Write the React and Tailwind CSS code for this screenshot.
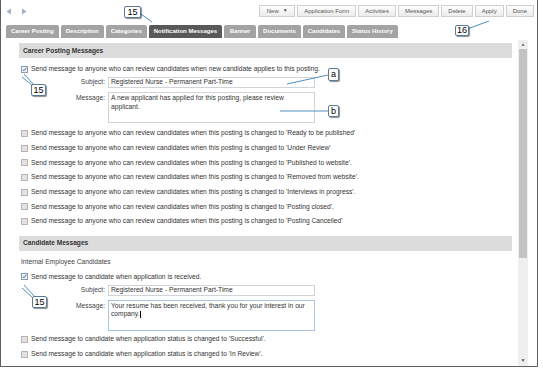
import React from 'react';

const font = { fontFamily: '"Liberation Sans", Arial, sans-serif' };

const buttons = ['Application Form', 'Activities', 'Messages', 'Delete', 'Apply', 'Done'];
const tabs = ['Career Posting', 'Description', 'Categories', 'Notification Messages', 'Banner', 'Documents', 'Candidates', 'Status History'];
const postingStates = [
  "'Ready to be published'",
  "'Under Review'",
  "'Published to website'.",
  "'Removed from website'.",
  "'Interviews in progress'.",
  "'Posting closed'.",
  "'Posting Cancelled'",
];

function Box({ checked }) {
  return (
    <span className={`relative inline-block w-[7px] h-[7px] shrink-0 border ${checked ? 'border-[#8a9bb0] bg-[#f4f6fa]' : 'border-[#b5b5b5] bg-[#e2e2e2]'}`}>
      {checked && (
        <svg viewBox="0 0 7 7" className="absolute left-0 top-0 w-[5px] h-[5px]">
          <path d="M1 3.5 L2.8 5.3 L6 1" fill="none" stroke="#2d5b9a" strokeWidth="1.3" />
        </svg>
      )}
    </span>
  );
}

function CheckRow({ checked, children, h = 'h-[14.7px]' }) {
  return (
    <div className={`flex items-center gap-[3px] pl-[2px] ${h} text-[6.7px] text-[#333]`}>
      <Box checked={checked} />
      <span className="whitespace-nowrap">{children}</span>
    </div>
  );
}

function Header({ children }) {
  return (
    <div className="h-[15px] bg-[#dcdcdc] flex items-center pl-[4px] text-[6.6px] font-bold text-[#333]">{children}</div>
  );
}

function Fields({ message, focus, cursor }) {
  const bc = focus ? 'border-[#a9c6e6]' : 'border-[#cfd4da]';
  return (
    <div className="flex flex-col">
      <div className="flex items-center h-[11px] mt-[2px]">
        <span className="w-[89px] text-right pr-[3px] text-[6.7px] text-[#444]">Subject:</span>
        <div className="w-[207px] h-[11px] border border-[#cfd4da] flex items-center px-[2px] text-[6.7px] text-[#333] whitespace-nowrap">
          Registered Nurse - Permanent Part-Time
        </div>
      </div>
      <div className="flex mt-[4px]">
        <span className="w-[89px] text-right pr-[3px] text-[6.7px] text-[#444] pt-[1px]">Message:</span>
        <div className={`w-[207px] h-[31px] border ${bc} px-[2px] pt-[1px] text-[6.7px] leading-[8.5px] text-[#333]`}>
          {message}
          {cursor && <span className="inline-block w-[1px] h-[7px] bg-black align-middle" />}
        </div>
      </div>
    </div>
  );
}

function Callout({ className, children }) {
  return (
    <div className={`absolute bg-white border border-[#5b7a99] rounded-[2px] shadow-[1px_1px_1px_rgba(0,0,0,0.45)] flex items-center justify-center text-[9px] text-black leading-none ${className}`}>
      {children}
    </div>
  );
}

export default function App() {
  return (
    <div className="relative w-[543px] h-[369px] bg-white overflow-hidden" style={font}>
      <div className="w-[538px] h-[367px] border-l border-r border-b border-[#5f5f5f] flex flex-col">
        {/* toolbar */}
        <div className="h-[23px] flex items-center justify-between pl-[5px] pr-[3px]">
          <div className="flex items-center gap-[9px] mt-[-1px]">
            <svg width="6" height="7" viewBox="0 0 6 7"><path d="M5 0.5 L0.5 3.5 L5 6.5 Z" fill="#9fb0c4" /></svg>
            <svg width="6" height="7" viewBox="0 0 6 7"><path d="M1 0.5 L5.5 3.5 L1 6.5 Z" fill="#9fb0c4" /></svg>
          </div>
          <div className="flex items-center gap-[2px] mt-[-1px]">
            <div className="h-[12px] w-[36px] flex items-center justify-center gap-[4px] border border-[#cfcfcf] bg-gradient-to-b from-[#fdfdfd] to-[#ececec] text-[6px] text-[#555]">
              New <span className="text-[5px]">▼</span>
            </div>
            {buttons.map(b => (
              <div key={b} className="h-[12px] px-[6px] flex items-center border border-[#cfcfcf] bg-gradient-to-b from-[#fdfdfd] to-[#ececec] text-[6px] text-[#555] whitespace-nowrap">
                {b}
              </div>
            ))}
          </div>
        </div>

        {/* tabs */}
        <div className="h-[15px] flex items-end gap-[2px] pl-[5px]">
          {tabs.map(t => (
            <div key={t}
              className={`h-[13px] px-[5px] flex items-center justify-center rounded-t-[2px] text-[6px] font-bold text-white whitespace-nowrap ${t === 'Banner' ? 'min-w-[32px]' : ''} ${t === 'Notification Messages' ? 'bg-[#595959]' : 'bg-[#a3a3a3]'}`}>
              {t}
            </div>
          ))}
        </div>

        {/* body */}
        <div className="flex flex-1 min-h-0 pt-[2px]">
          <div className="w-[493px] ml-[18px] pt-[3px] flex flex-col">
            <Header>Career Posting Messages</Header>
            <div className="mt-[5px]">
              <CheckRow checked h="h-[12px]">Send message to anyone who can review candidates when new candidate applies to this posting.</CheckRow>
            </div>
            <Fields message="A new applicant has applied for this posting, please review applicant." />
            <div className="mt-[3px]">
              {postingStates.map(s => (
                <CheckRow key={s}>Send message to anyone who can review candidates when this posting is changed to {s}</CheckRow>
              ))}
            </div>
            <div className="mt-[7px]">
              <Header>Candidate Messages</Header>
            </div>
            <div className="h-[13px] mt-[5px] flex items-center pl-[2px] text-[6.7px] text-[#444]">Internal Employee Candidates</div>
            <div className="mt-[2px]">
              <CheckRow checked h="h-[12px]">Send message to candidate when application is received.</CheckRow>
            </div>
            <Fields focus cursor message="Your resume has been received, thank you for your interest in our company." />
            <div className="mt-[1px]">
              <CheckRow h="h-[15px]">Send message to candidate when application status is changed to 'Successful'.</CheckRow>
              <CheckRow h="h-[15px]">Send message to candidate when application status is changed to 'In Review'.</CheckRow>
            </div>
          </div>

          {/* scrollbar */}
          <div className="w-[10px] ml-[6px] bg-[#efefef] flex flex-col items-center">
            <span className="text-[5px] text-[#777] leading-[7px] mt-[1px]">▲</span>
            <div className="w-[8px] h-[209px] bg-[#c3c3c3] mt-[1px]" />
            <div className="flex-1" />
            <span className="text-[5px] text-[#555] leading-[7px] mb-[2px]">▼</span>
          </div>
        </div>
      </div>

      {/* callout leader lines */}
      <svg className="absolute inset-0 pointer-events-none" width="543" height="369">
        <g stroke="#4f8fc0" strokeWidth="1" fill="none">
          <line x1="141" y1="14" x2="152" y2="22" />
          <line x1="467" y1="29" x2="489" y2="21" />
          <line x1="328" y1="75" x2="287" y2="84" />
          <line x1="328" y1="111" x2="280" y2="111" />
          <line x1="24" y1="74" x2="34" y2="85" />
          <line x1="22" y1="77" x2="33" y2="86" />
          <line x1="24" y1="285" x2="35" y2="297" />
          <line x1="22" y1="288" x2="33" y2="298" />
        </g>
      </svg>

      <Callout className="left-[124px] top-[6px] w-[17px] h-[12px]">15</Callout>
      <Callout className="left-[455px] top-[25px] w-[14px] h-[11px]">16</Callout>
      <Callout className="left-[328px] top-[68px] w-[11px] h-[13px]">a</Callout>
      <Callout className="left-[328px] top-[105px] w-[11px] h-[12px]">b</Callout>
      <Callout className="left-[31px] top-[84px] w-[15px] h-[12px]">15</Callout>
      <Callout className="left-[32px] top-[296px] w-[15px] h-[12px]">15</Callout>
    </div>
  );
}
